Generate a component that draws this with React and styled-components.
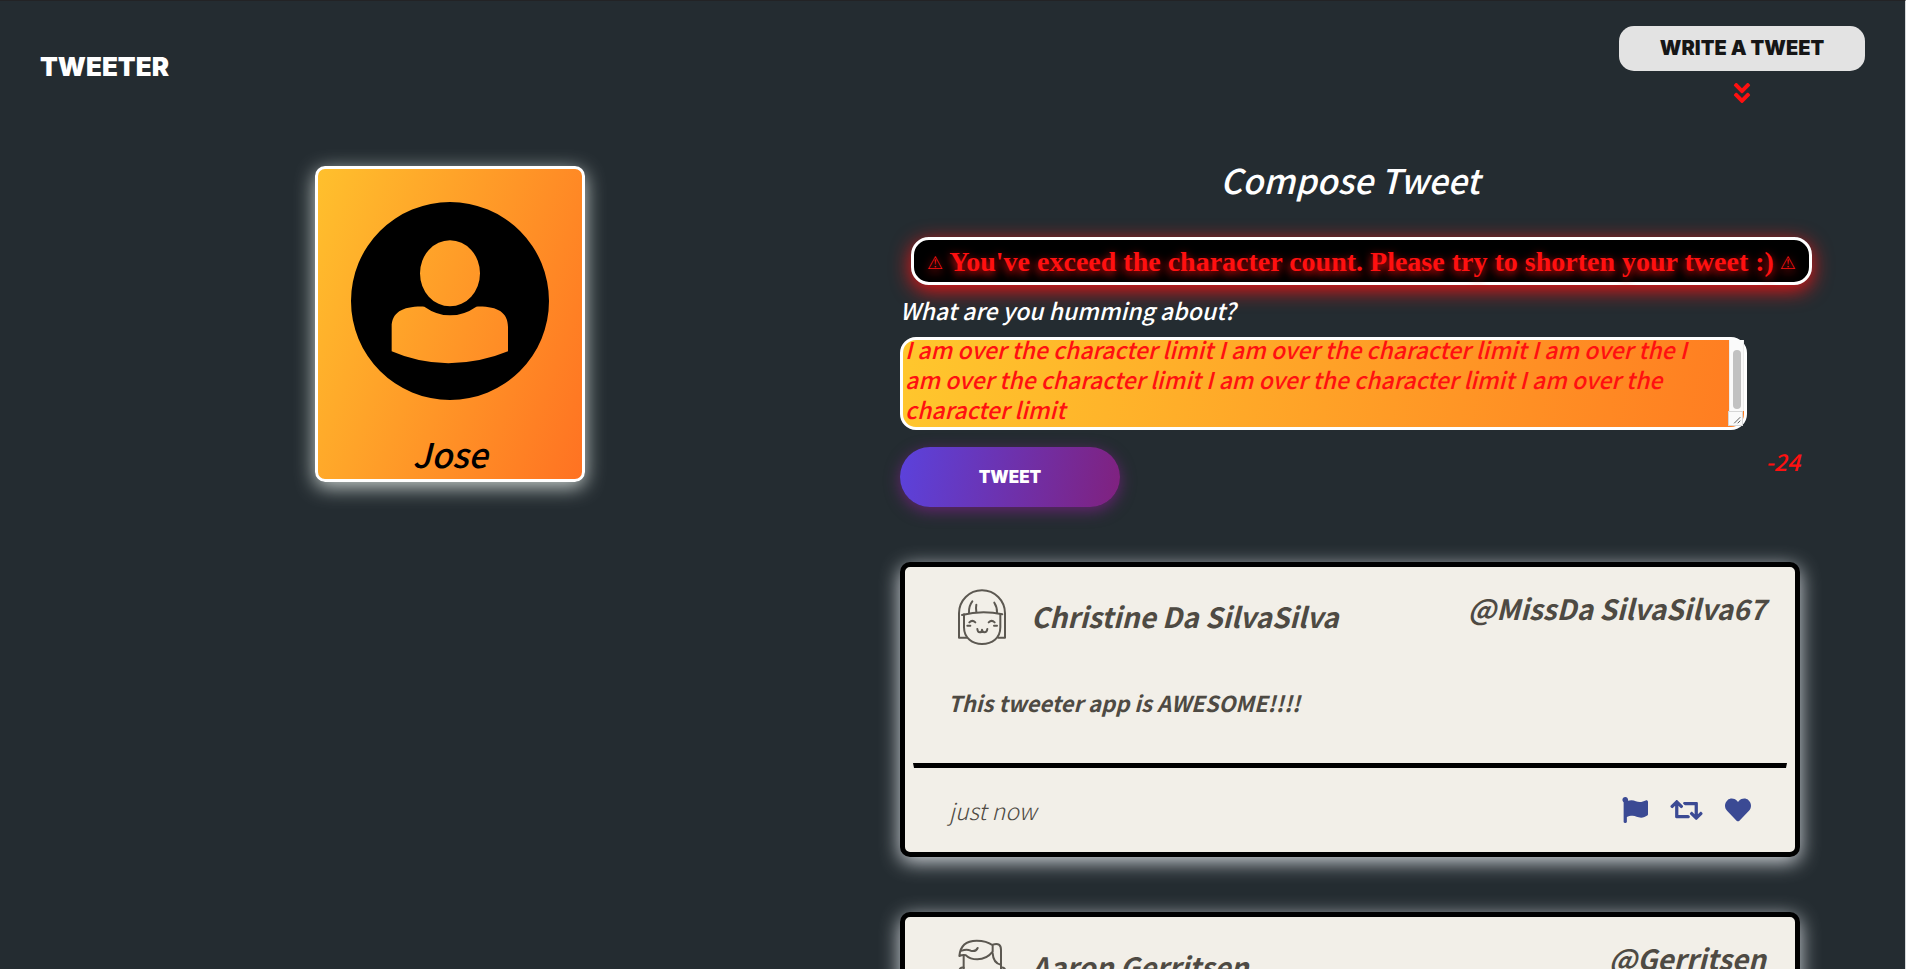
import React, { useLayoutEffect, useRef, useState } from "react";
import styled, { createGlobalStyle, css } from "styled-components";
import { FaAngleDoubleDown, FaFlag, FaRetweet, FaHeart } from "react-icons/fa";

const sans = `"Noto Sans CJK SC", "Open Sans", sans-serif`;
const block = `Inter, "Liberation Sans", sans-serif`;
const MAX_LENGTH = 140;

const GlobalStyle = createGlobalStyle`
  *, *::before, *::after { box-sizing: border-box; }
  body { margin: 0; background: #242c31; font-family: ${sans}; }
  h1, h2, h3, p { margin: 0; }
`;

const Page = styled.div`
  height: 100vh;
  overflow: hidden;
  background: #242c31;
  border-top: 1px solid #232325;
  border-right: 1px solid #d5d7d9;
`;

const Nav = styled.header`
  display: flex;
  justify-content: space-between;
  align-items: flex-start;
  height: 165px;
  padding: 25px 40px 0;
`;

const Logo = styled.a`
  margin-top: 25px;
  color: #fff;
  font: 900 26px/32px ${block};
  text-decoration: none;
`;

const Compose = styled.div`
  display: flex;
  flex-direction: column;
  align-items: center;
  gap: 9px;
  color: #ff1010;
  font-size: 26px;
`;

const WriteButton = styled.button`
  width: 246px;
  height: 45px;
  padding: 0 0 2px;
  border: 0;
  border-radius: 15px;
  background: #e3e3e3;
  color: #161616;
  font: 900 20px/24px ${block};
`;

const Columns = styled.div`
  display: grid;
  grid-template-columns: 1fr 1fr;
  padding-right: 105px;
`;

const Profile = styled.aside`
  justify-self: center;
  align-self: start;
  display: flex;
  flex-direction: column;
  align-items: center;
  justify-content: space-between;
  width: 270px;
  height: 316px;
  padding: 33px 0 0;
  border: 3px solid #fff;
  border-radius: 10px;
  background: linear-gradient(110deg, #ffc02d, #ff7222);
  box-shadow: 0 5px 20px rgba(242, 250, 245, 0.8);
`;

const ProfileName = styled.h2`
  color: #000;
  font: italic 500 34px/50px ${sans};
`;

const Feed = styled.main`
  min-width: 0;
`;

const Title = styled.h1`
  margin-bottom: 43px;
  color: #fff;
  font: italic 500 34px/28px ${sans};
  text-align: center;
`;

const Alert = styled.div`
  display: flex;
  align-items: center;
  justify-content: center;
  gap: 6px;
  height: 48px;
  margin: 0 -12px 0 11px;
  padding-top: 2px;
  border: 3px solid #fff;
  border-radius: 18px;
  background: #000;
  box-shadow: 0 5px 20px #f01414;
  color: #ff1010;
  font: bold 28px/36px "Liberation Serif", serif;
  text-shadow: 0 3px 10px #ff1010;
  white-space: nowrap;
`;

const Warning = styled.span`
  padding-top: 2px;
  font: 18px/24px "DejaVu Sans", sans-serif;
`;

const Label = styled.label`
  display: block;
  margin: 10px 0 12px;
  color: #fff;
  font: italic 500 23px/30px ${sans};
`;

const TweetField = styled.div`
  position: relative;
  width: calc(100% - 53px);
`;

const TweetBox = styled.textarea`
  display: block;
  width: 100%;
  height: 93px;
  padding: 2px 18px 3px 2px;
  border: 3px solid #fff;
  border-radius: 16px;
  outline: 0;
  background: linear-gradient(100deg, #ffc72d, #ff7c21);
  color: #ff1010;
  font: italic 500 23px/30px ${sans};
  resize: none;
  scrollbar-width: none;
`;

const ScrollRail = styled.div`
  position: absolute;
  top: 3px;
  right: 3px;
  width: 15px;
  height: 71px;
  padding: 10px 2px 2px 3px;
  border: solid #ececec;
  border-width: 0 1px;
  background: #fafafa;
  pointer-events: none;

  &::before {
    content: "";
    display: block;
    height: 100%;
    border-radius: 4px;
    background: #c1c1c1;
  }
`;

const ResizeCorner = styled.svg`
  position: absolute;
  right: 4px;
  bottom: 4px;
  border: 1px solid #d6d6d6;
  background: #fafafa;
  stroke: #444;
  pointer-events: none;
`;

const FormFooter = styled.div`
  display: flex;
  justify-content: space-between;
  align-items: flex-start;
  margin: 17px 0 55px;
`;

const TweetButton = styled.button`
  width: 220px;
  height: 60px;
  border: 0;
  border-radius: 30px;
  background: linear-gradient(100deg, #5b42dc, #80217e);
  box-shadow: 0 4px 15px rgba(128, 33, 140, 0.7);
  color: #fff;
  font: 900 17px/24px ${block};
`;

const Counter = styled.output`
  color: #ff1010;
  font: italic 500 23px/28px ${sans};
`;

const Card = styled.article`
  height: 295px;
  margin-bottom: 55px;
  padding: 0 8px;
  border: 5px solid #000;
  border-radius: 10px;
  background: #f2efe8;
  box-shadow: 0 5px 20px rgba(242, 246, 250, 0.85);
  color: #4e4a43;
`;

const CardHeader = styled.header`
  display: flex;
  align-items: flex-start;
  height: 113px;
  padding: 22px 21px 0 45px;
`;

const AuthorName = styled.h3`
  margin: 8px auto 0 25px;
  font: italic bold 28px/38px ${sans};
`;

const Handle = styled.span`
  font: italic bold 28px/38px ${sans};
`;

const Message = styled.p`
  height: 83px;
  padding: 7px 35px;
  font: italic bold 22px/30px ${sans};
`;

const CardFooter = styled.footer`
  display: flex;
  justify-content: space-between;
  align-items: center;
  height: 89px;
  padding: 0 35px 1px;
  border: solid transparent;
  border-width: 5px 1px 0;
  border-top-color: #000;
  font: italic 300 23px/30px ${sans};
`;

const Actions = styled.div`
  display: flex;
  gap: 22px;
`;

const IconButton = styled.button`
  display: flex;
  padding: 0;
  border: 0;
  background: none;
  color: #3b4a94;
  font-size: 26px;

  ${(p) => p.$wide && css`
    svg { width: 33px; }
  `}
`;

const Drawing = styled.svg`
  display: block;
  width: 48px;
  height: 56px;
  fill: none;
  stroke: #5c5851;
  stroke-width: 6;
  stroke-linecap: round;
  stroke-linejoin: round;
`;

function ProfilePicture() {
  return (
    <svg width="198" height="198" viewBox="183 185 594 594" role="img" aria-label="Jose">
      <path
        fillRule="evenodd"
        d="M183 482a297 297 0 1 0 594 0a297 297 0 1 0-594 0zM390 399a90 99 0 1 1 180 0a90 99 0 1 1-180 0zM305 633V560C305 515 340 497 403 499Q440 525 480 525Q522 525 559 499C620 497 654 515 654 560V633Q570 668 475 669Q385 668 305 633z"
      />
    </svg>
  );
}

function BobAvatar() {
  return (
    <Drawing viewBox="54 57 144 168" aria-hidden="true">
      <path d="M80 203H57V130A69 69 0 0 1 195 130V203H175" />
      <path d="M66 135Q126 120 187 133" />
      <path d="M72 133V172C72 205 98 222 126 222C156 222 181 205 181 172V133" />
      <path d="M97 94Q86 108 87 128M109 104Q107 115 109 126M163 98Q172 112 171 128" />
      <path d="M88 157Q97 148 106 157M146 157Q155 148 164 157M82 167H91M162 167H171" />
      <path d="M112 177Q113 187 119 187Q126 187 126 179Q127 187 133 187Q141 187 142 177" />
    </Drawing>
  );
}

function PonytailAvatar() {
  return (
    <Drawing viewBox="54 57 144 168" aria-hidden="true">
      <path d="M58 108Q62 62 110 62Q140 62 158 76V95Q140 118 112 118Q90 118 78 106Q68 104 58 108z" />
      <path d="M65 92Q80 86 92 92Q108 96 113 84" />
      <path d="M158 74Q183 66 183 90V134Q160 130 158 100" />
      <path d="M71 108V172C71 205 98 222 126 222C156 222 183 205 183 172V134" />
      <path d="M71 143Q58 141 58 154Q60 165 71 165M183 143Q196 141 196 154Q194 165 183 165" />
    </Drawing>
  );
}

const tweets = [
  {
    name: "Christine Da SilvaSilva",
    handle: "@MissDa SilvaSilva67",
    avatar: <BobAvatar />,
    text: "This tweeter app is AWESOME!!!!",
    age: "just now",
  },
  { name: "Aaron Gerritsen", handle: "@Gerritsen", avatar: <PonytailAvatar /> },
];

function Tweet({ name, handle, avatar, text, age }) {
  return (
    <Card>
      <CardHeader>
        {avatar}
        <AuthorName>{name}</AuthorName>
        <Handle>{handle}</Handle>
      </CardHeader>
      {text && <Message>{text}</Message>}
      {age && (
        <CardFooter>
          <time>{age}</time>
          <Actions>
            <IconButton aria-label="Report"><FaFlag /></IconButton>
            <IconButton aria-label="Retweet" $wide><FaRetweet /></IconButton>
            <IconButton aria-label="Like"><FaHeart /></IconButton>
          </Actions>
        </CardFooter>
      )}
    </Card>
  );
}

const limit = "I am over the character limit";
const draft = `${limit} ${limit} I am over the I am over the character limit ${limit} ${limit} `;

export default function App() {
  const [text, setText] = useState(draft);
  const box = useRef(null);

  useLayoutEffect(() => {
    box.current.scrollTop = box.current.scrollHeight;
  }, []);

  const left = MAX_LENGTH - text.length;

  return (
    <Page>
      <GlobalStyle />
      <Nav>
        <Logo href="#">TWEETER</Logo>
        <Compose>
          <WriteButton type="button">WRITE A TWEET</WriteButton>
          <FaAngleDoubleDown />
        </Compose>
      </Nav>
      <Columns>
        <Profile>
          <ProfilePicture />
          <ProfileName>Jose</ProfileName>
        </Profile>
        <Feed>
          <Title>Compose Tweet</Title>
          <form onSubmit={(e) => e.preventDefault()}>
            {left < 0 && (
              <Alert role="alert">
                <Warning>⚠</Warning>
                You've exceed the character count. Please try to shorten your tweet :)
                <Warning>⚠</Warning>
              </Alert>
            )}
            <Label htmlFor="tweet-text">What are you humming about?</Label>
            <TweetField>
              <TweetBox
                id="tweet-text"
                ref={box}
                spellCheck={false}
                value={text}
                onChange={(e) => setText(e.target.value)}
              />
              <ScrollRail />
              <ResizeCorner width="15" height="15" viewBox="0 0 15 15" aria-hidden="true">
                <path d="M6 13L13 6M10 13L13 10" />
              </ResizeCorner>
            </TweetField>
            <FormFooter>
              <TweetButton type="submit">TWEET</TweetButton>
              <Counter htmlFor="tweet-text">{left}</Counter>
            </FormFooter>
          </form>
          {tweets.map((tweet) => (
            <Tweet key={tweet.handle} {...tweet} />
          ))}
        </Feed>
      </Columns>
    </Page>
  );
}
